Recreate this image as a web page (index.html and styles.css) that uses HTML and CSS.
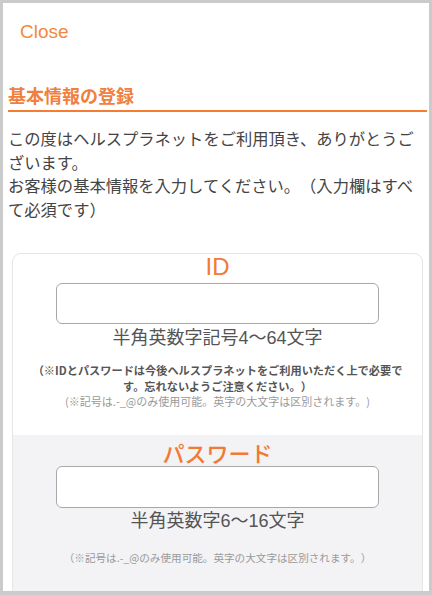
FILE: index.html
```html
<!DOCTYPE html>
<html lang="ja">
<head>
<meta charset="UTF-8">
<meta name="viewport" content="width=device-width, initial-scale=1.0">
<title>基本情報の登録</title>
<link rel="stylesheet" href="styles.css">
</head>
<body>
<div class="frame">
    <div class="topbar">
        <a class="close" href="#">Close</a>
    </div>
    <h2 class="title">基本情報の登録</h2>
    <p class="intro">この度はヘルスプラネットをご利用頂き、ありがとうございます。<br>お客様の基本情報を入力してください。（入力欄はすべて必須です）</p>

    <div class="card">
        <div class="field">
            <div class="label">ID</div>
            <input type="text" class="box">
            <div class="hint">半角英数字記号4〜64文字</div>
            <p class="note">（※IDとパスワードは今後ヘルスプラネットをご利用いただく上で必要です。忘れないようご注意ください。）</p>
            <p class="subnote">(※記号は.-_@のみ使用可能。英字の大文字は区別されます。)</p>
        </div>
        <div class="field field-alt">
            <div class="label label-jp">パスワード</div>
            <input type="password" class="box">
            <div class="hint">半角英数字6〜16文字</div>
            <p class="subnote subnote-pw">（※記号は.-_@のみ使用可能。英字の大文字は区別されます。）</p>
        </div>
    </div>
</div>
</body>
</html>
```

FILE: styles.css
```css
body {
    margin: 0;
    padding: 0;
    font-family: "Liberation Sans", "Noto Sans CJK JP", sans-serif;
    background-color: #fff;
    text-spacing-trim: space-all;
}

.frame {
    width: 432px;
    height: 595px;
    box-sizing: border-box;
    border: 3px solid #cbcbcb;
    border-bottom-width: 4px;
    overflow: hidden;
    background-color: #fff;
}

.topbar {
    padding: 17px 0 0 17px;
    height: 45px;
    box-sizing: border-box;
}

.close {
    color: #f28a3e;
    font-size: 19px;
    line-height: 24px;
    text-decoration: none;
}

.title {
    margin: 35px 2px 0 5px;
    padding: 0 0 3px 0;
    font-family: "Noto Sans CJK JP", sans-serif;
    font-size: 18px;
    font-weight: bold;
    line-height: 24px;
    color: #f08040;
    border-bottom: 2px solid #f57c30;
}

.intro {
    margin: 15px 2px 0 5px;
    font-family: "Noto Sans CJK JP", sans-serif;
    font-size: 16.3px;
    line-height: 23.5px;
    color: #444;
}

.card {
    margin: 32px 6px 0 9px;
    border: 1px solid #e6e6e6;
    border-radius: 9px;
    overflow: hidden;
    background-color: #fff;
}

.field {
    display: flex;
    flex-direction: column;
    align-items: center;
    padding-bottom: 27px;
}

.field-alt {
    background-color: #f3f2f4;
    padding-top: 4px;
    padding-bottom: 40px;
}

.label {
    font-family: "Liberation Sans", "Noto Sans CJK JP", sans-serif;
    font-size: 24px;
    line-height: 26px;
    color: #f07a36;
}

.label-jp {
    font-family: "Noto Sans CJK JP", sans-serif;
    font-size: 22px;
    font-weight: 500;
}

.box {
    width: 323px;
    height: 41px;
    margin-top: 3px;
    box-sizing: border-box;
    border: 1px solid #a8a8a8;
    border-radius: 6px;
    background-color: #fff;
    outline: none;
}

.field-alt .box {
    height: 42px;
    margin-top: 1px;
}

.hint {
    font-size: 18px;
    line-height: 28px;
    color: #555;
}

.field-alt .hint {
    line-height: 26px;
}

.note {
    margin: 10px 0 0 0;
    padding: 0 18px;
    font-family: "Noto Sans CJK JP", sans-serif;
    font-size: 11.2px;
    font-weight: bold;
    line-height: 16px;
    color: #555;
    text-align: center;
}

.subnote {
    margin: 0;
    font-family: "Noto Sans CJK JP", sans-serif;
    font-size: 11px;
    line-height: 14px;
    color: #9a9a9a;
    text-align: center;
}

.subnote-pw {
    margin-top: 17px;
    font-size: 10.6px;
}
```
